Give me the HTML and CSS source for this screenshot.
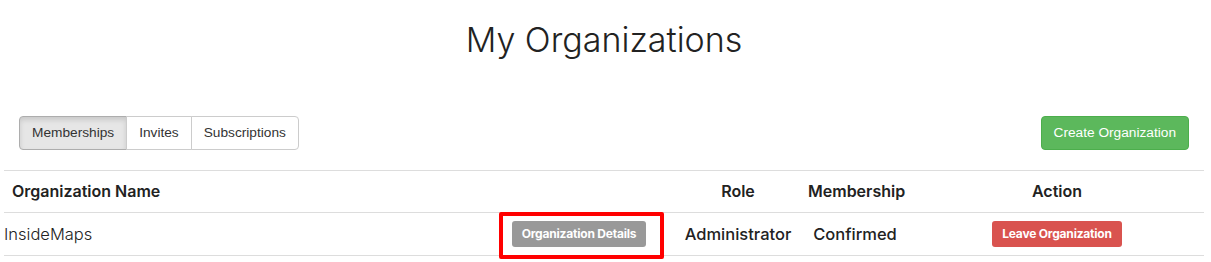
FILE: index.html
```html
<!DOCTYPE html>
<html lang="en">
<head>
    <meta charset="UTF-8">
    <meta name="viewport" content="width=device-width, initial-scale=1.0">
    <title>My Organizations</title>
    <link rel="stylesheet" href="styles.css">
</head>
<body>
    <div class="container">
        <h1 class="page-title">My Organizations</h1>

        <div class="toolbar">
            <div class="btn-group">
                <a class="btn active" href="#">Memberships</a>
                <a class="btn" href="#">Invites</a>
                <a class="btn" href="#">Subscriptions</a>
            </div>
            <a class="btn btn-success" href="#">Create Organization</a>
        </div>

        <table class="org-table">
            <colgroup>
                <col class="col-name">
                <col class="col-details">
                <col class="col-role">
                <col class="col-member">
                <col class="col-action">
            </colgroup>
            <thead>
                <tr>
                    <th class="left">Organization Name</th>
                    <th></th>
                    <th>Role</th>
                    <th>Membership</th>
                    <th>Action</th>
                </tr>
            </thead>
            <tbody>
                <tr>
                    <td class="org-name">InsideMaps</td>
                    <td class="details-cell">
                        <a class="btn-xs btn-gray" href="#">Organization Details</a>
                        <!-- highlight box -->
                        <span class="highlight"></span>
                    </td>
                    <td class="strong">Administrator</td>
                    <td class="strong">Confirmed</td>
                    <td><a class="btn-xs btn-danger" href="#">Leave Organization</a></td>
                </tr>
            </tbody>
        </table>
    </div>
</body>
</html>
```
FILE: styles.css
```css
html, body {
    min-height: 262px;
}
body {
    margin: 0;
    padding: 0;
    font-family: "Inter", "Liberation Sans", sans-serif;
    color: #333;
    background-color: #fff;
}
.container {
    width: 1200px;
    margin: 0 4px;
    padding-bottom: 8px;
}
.page-title {
    margin: 18px 0 0;
    text-align: center;
    font-size: 34px;
    font-weight: 300;
    line-height: 44px;
    color: #222;
}

.toolbar {
    display: flex;
    justify-content: space-between;
    align-items: center;
    padding: 0 15px;
    margin-top: 54px;
    margin-bottom: 20px;
}
.btn {
    display: inline-block;
    padding: 6px 12px;
    font-family: "Liberation Sans", Arial, sans-serif;
    font-size: 13.7px;
    line-height: 20px;
    color: #333;
    text-decoration: none;
    background-color: #fff;
    border: 1px solid #ccc;
    border-radius: 4px;
}
.btn-group {
    display: flex;
}
.btn-group .btn {
    border-radius: 0;
    margin-left: -1px;
}
.btn-group .btn:first-child {
    margin-left: 0;
    border-radius: 4px 0 0 4px;
}
.btn-group .btn:last-child {
    border-radius: 0 4px 4px 0;
}
.btn.active {
    background-color: #e6e6e6;
    border-color: #adadad;
    box-shadow: inset 0 3px 5px rgba(0, 0, 0, 0.125);
}
.btn-success {
    color: #fff;
    background-color: #5cb85c;
    border-color: #4cae4c;
}

.org-table {
    width: 1200px;
    border-collapse: collapse;
    table-layout: fixed;
}
.col-name { width: 478px; }
.col-details { width: 194px; }
.col-role { width: 124px; }
.col-member { width: 110px; }
.col-action { width: 294px; }

.org-table th,
.org-table td {
    padding: 8px;
    font-size: 16.5px;
    line-height: 25px;
    text-align: center;
    border-top: 1px solid #ddd;
}
.org-table th {
    font-size: 16px;
    font-weight: 600;
    color: #222;
    border-bottom: 1px solid #ddd;
}
.org-table th.left {
    text-align: left;
}
.org-table td {
    line-height: 24px;
    border-bottom: 1px solid #ddd;
    color: #222;
}
.org-table td.org-name {
    text-align: left;
    padding-left: 0;
    font-weight: 300;
}
.org-table td.strong {
    font-weight: 500;
}

.btn-xs {
    display: inline-block;
    padding: 4px 10px;
    font-size: 12px;
    line-height: 18px;
    font-weight: 700;
    letter-spacing: -0.2px;
    color: #fff;
    text-decoration: none;
    border-radius: 3px;
    vertical-align: top;
}
.btn-gray {
    background-color: #999;
}
.btn-danger {
    background-color: #d9534f;
}

.details-cell {
    position: relative;
}
.highlight {
    display: block;
    position: absolute;
    left: 17px;
    top: -1px;
    width: 157px;
    height: 39px;
    border: 4px solid #f00;
    border-radius: 2px;
}
```
